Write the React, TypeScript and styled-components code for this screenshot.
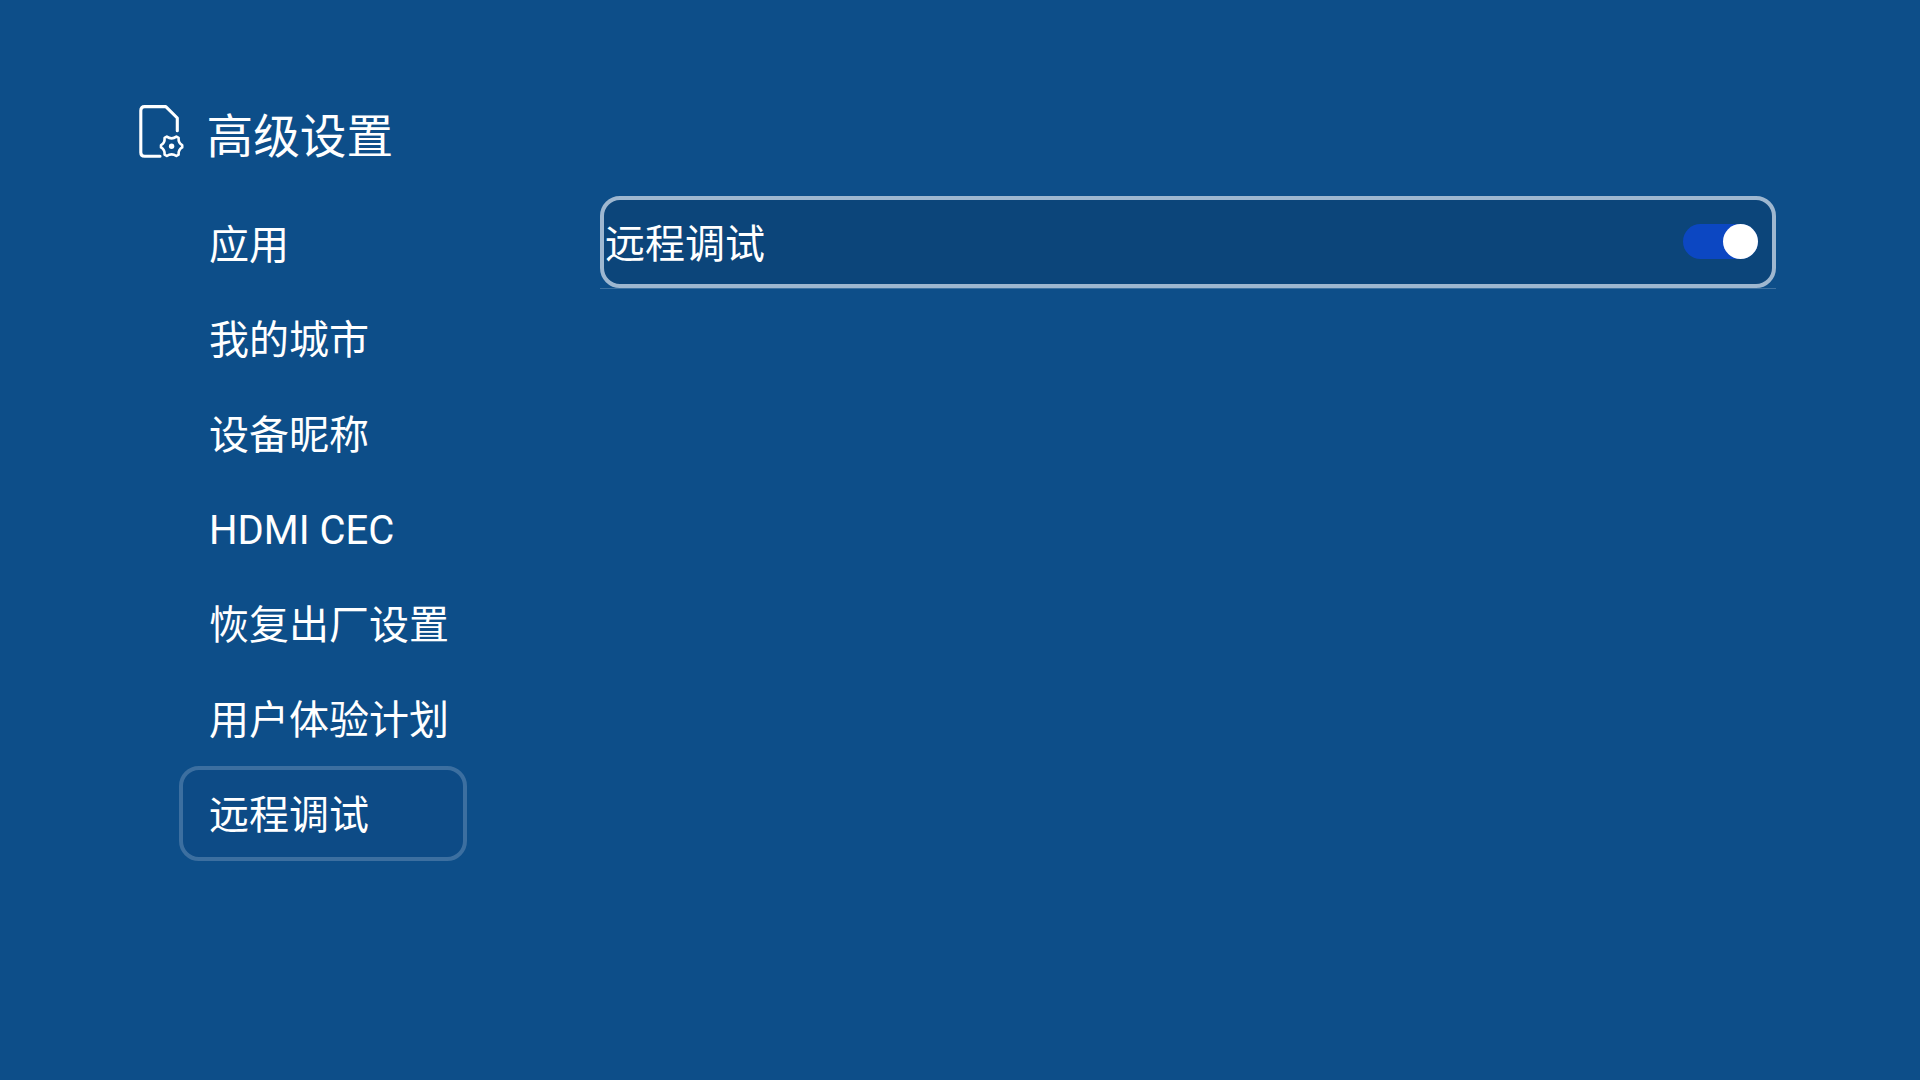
import React from 'react';
import styled, { createGlobalStyle } from 'styled-components';

const GlobalStyle = createGlobalStyle`
  * { box-sizing: border-box; }
  body {
    margin: 0;
    background: #0d4e89;
    color: #fff;
    font-family: Roboto, "Noto Sans CJK SC", sans-serif;
  }
`;

const Screen = styled.div`
  width: 1920px;
  height: 1080px;
  padding: 104px 144px 0 138px;
  overflow: hidden;
  background: #0d4e89;
`;

const Header = styled.header`
  display: flex;
  height: 92px;
`;

const HeaderIcon = styled.svg`
  display: block;
  width: 48px;
  height: 56px;
  flex: none;
`;

const Title = styled.h1`
  margin: 2px 0 0 20.5px;
  font-size: 46.67px;
  font-weight: 400;
  line-height: 62px;
  white-space: nowrap;
`;

const Body = styled.div`
  display: flex;
  justify-content: space-between;
  padding-left: 41px;
`;

const Menu = styled.nav`
  display: flex;
  flex-direction: column;
  width: 288px;
`;

const MenuItem = styled.div<{ $selected?: boolean }>`
  display: flex;
  align-items: center;
  height: 95px;
  padding: 4px 0 0 26px;
  border: 4px solid ${(p) => (p.$selected ? '#3c6fa0' : 'transparent')};
  border-radius: 20px;
  background: ${(p) => (p.$selected ? '#0d4b86' : 'transparent')};
  font-size: 40px;
  line-height: 60px;
  white-space: nowrap;
`;

const Panel = styled.main`
  width: 1176px;
  height: 93px;
  border-bottom: 1px solid #3d71a1;
`;

const SettingRow = styled.div`
  display: flex;
  align-items: flex-start;
  justify-content: space-between;
  height: 92px;
  padding: 0 14px 0 1px;
  border: 4px solid #9eb7d0;
  border-radius: 20px;
  background: #0c457a;
`;

const SettingLabel = styled.span`
  margin-top: 15px;
  font-size: 40px;
  line-height: 60px;
`;

const Toggle = styled.div`
  display: flex;
  justify-content: flex-end;
  width: 75px;
  height: 35px;
  margin-top: 24px;
  border-radius: 18px;
  background: #0c47c2;
`;

const Knob = styled.div`
  width: 35px;
  height: 35px;
  border-radius: 50%;
  background: #fff;
`;

const items = ['应用', '我的城市', '设备昵称', 'HDMI CEC', '恢复出厂设置', '用户体验计划', '远程调试'];
const selected = '远程调试';

export default function App() {
  return (
    <>
      <GlobalStyle />
      <Screen>
        <Header>
          <HeaderIcon viewBox="0 0 48 56" fill="none" stroke="#fff" strokeLinecap="round" strokeLinejoin="round">
            <path strokeWidth="3.1" d="M22 52.2H6.6Q2.8 52.2 2.8 48.4V6.4Q2.8 2.6 6.6 2.6H27.8L39.3 14V26.8" />
            <path
              strokeWidth="2.6"
              d="M28.8 32.6Q33.6 36 38.4 32.6L40.6 33.9Q40.2 39 44.2 41.2V43.4Q40.2 45.6 40.6 50.7L38.4 52Q33.6 48.6 28.8 52L26.6 50.7Q27 45.6 23 43.4V41.2Q27 39 26.6 33.9Z"
            />
            <circle cx="33.6" cy="42.3" r="2.7" fill="#fff" stroke="none" />
          </HeaderIcon>
          <Title>高级设置</Title>
        </Header>
        <Body>
          <Menu>
            {items.map((name) => (
              <MenuItem key={name} $selected={name === selected}>
                {name}
              </MenuItem>
            ))}
          </Menu>
          <Panel>
            <SettingRow>
              <SettingLabel>{selected}</SettingLabel>
              <Toggle>
                <Knob />
              </Toggle>
            </SettingRow>
          </Panel>
        </Body>
      </Screen>
    </>
  );
}
